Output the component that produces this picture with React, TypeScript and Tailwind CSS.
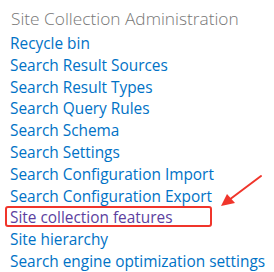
export default function App() {
  const links = [
    "Recycle bin",
    "Search Result Sources",
    "Search Result Types",
    "Search Query Rules",
    "Search Schema",
    "Search Settings",
    "Search Configuration Import",
    "Search Configuration Export",
    "Site collection features",
    "Site hierarchy",
    "Search engine optimization settings",
  ];

  return (
    <div className="relative w-[274px] h-[272px] bg-white overflow-hidden font-['Open_Sans',sans-serif]">
      <div className="pl-[10px] pt-[6px]">
        <h2 className="text-[17.3px] font-light leading-[26px] text-[#777] mb-[1px] pl-[1px]">
          Site Collection Administration
        </h2>
        <ul className="flex flex-col">
          {links.map((l) => (
            <li key={l} className="leading-[21.8px] text-[15.4px]">
              {l === "Site collection features" ? (
                <a className="relative text-[#5c3fa0]">
                  {l}
                  <span className="absolute -left-[5px] -top-[1px] w-[207px] h-[21px] border-2 border-[#f0352b] rounded-[3px]" />
                </a>
              ) : (
                <a className="text-[#0072c6]">{l}</a>
              )}
            </li>
          ))}
        </ul>
      </div>
      {/* arrow */}
      <svg className="absolute left-[215px] top-[172px]" width="50" height="40" viewBox="0 0 50 40">
        <line x1="46" y1="4" x2="14" y2="28" stroke="#f0352b" strokeWidth="2" strokeLinecap="round" />
        <polygon points="6,34 12,22 20,31" fill="#f0352b" />
      </svg>
    </div>
  );
}
